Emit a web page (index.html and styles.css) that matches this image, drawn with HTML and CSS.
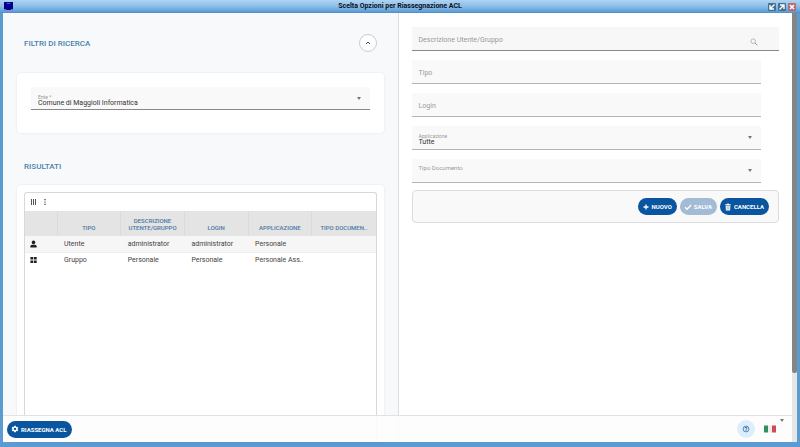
FILE: index.html
```html
<!DOCTYPE html>
<html lang="it">
<head>
    <meta charset="UTF-8">
    <meta name="viewport" content="width=device-width, initial-scale=1.0">
    <title>Scelta Opzioni per Riassegnazione ACL</title>
    <link rel="stylesheet" href="styles.css">
</head>
<body>
    <div class="window">
        <header class="titlebar">
            <svg class="app-icon" viewBox="0 0 10 10" aria-hidden="true">
                <rect width="10" height="9" fill="#00008b"/>
                <path d="M3 1.5h4" stroke="#5c6fd0"/>
                <path d="M0 8.5h2.5M7.5 8.5H10M3 9.5h4" stroke="#9a86d8"/>
            </svg>
            <h1>Scelta Opzioni per Riassegnazione ACL</h1>
            <div class="window-buttons">
                <button type="button" aria-label="Riduci">
                    <svg viewBox="0 0 8 8"><path d="M6.5 1.5L2.5 5.5M2 2v4h4" fill="none" stroke="#fff" stroke-width="1.4"/></svg>
                </button>
                <button type="button" aria-label="Ingrandisci">
                    <svg viewBox="0 0 8 8"><path d="M1.5 6.5L5.5 2.5M2 2h4v4" fill="none" stroke="#fff" stroke-width="1.4"/></svg>
                </button>
                <button type="button" class="close" aria-label="Chiudi">
                    <svg viewBox="0 0 8 8"><path d="M2 2l4 4M6 2L2 6" fill="none" stroke="#fff" stroke-width="1.6"/></svg>
                </button>
            </div>
        </header>

        <div class="content">
            <main class="panels">
                <section class="panel-left">
                    <div class="section-head">
                        <h2>FILTRI DI RICERCA</h2>
                        <button type="button" class="collapse" aria-label="Chiudi filtri">
                            <svg viewBox="0 0 6 6"><path d="M1 4l2-2 2 2" fill="none" stroke="#444" stroke-width="1"/></svg>
                        </button>
                    </div>
                    <div class="card filters">
                        <div class="field filled strong">
                            <label for="ente">Ente *</label>
                            <select id="ente">
                                <option>Comune di Maggioli Informatica</option>
                            </select>
                            <span class="arrow"></span>
                        </div>
                    </div>

                    <div class="section-head results-head">
                        <h2>RISULTATI</h2>
                    </div>
                    <div class="card results">
                        <div class="grid">
                            <div class="toolbar">
                                <button type="button" aria-label="Colonne">
                                    <svg viewBox="0 0 6 8"><path d="M.5 1v6M2.5 1v6M4.5 1v6" stroke="#555" stroke-width="1"/></svg>
                                </button>
                                <button type="button" aria-label="Altro">
                                    <svg viewBox="0 0 6 8"><path d="M2.4 1h1.2v1.2H2.4zM2.4 3.4h1.2v1.2H2.4zM2.4 5.8h1.2V7H2.4z" fill="#333"/></svg>
                                </button>
                            </div>
                            <table>
                                <thead>
                                    <tr>
                                        <th class="icon-col"></th>
                                        <th>TIPO</th>
                                        <th>DESCRIZIONE UTENTE/GRUPPO</th>
                                        <th>LOGIN</th>
                                        <th>APPLICAZIONE</th>
                                        <th>TIPO DOCUMEN..</th>
                                    </tr>
                                </thead>
                                <tbody>
                                    <tr>
                                        <td class="icon-col">
                                            <svg viewBox="0 0 7 8"><circle cx="3.5" cy="2.4" r="1.8"/><path d="M.4 7.400V6.200Q.4 4.700 2 4.700H5Q6.600 4.700 6.600 6.200V7.400Z"/></svg>
                                        </td>
                                        <td>Utente</td>
                                        <td>administrator</td>
                                        <td>administrator</td>
                                        <td>Personale</td>
                                        <td></td>
                                    </tr>
                                    <tr>
                                        <td class="icon-col">
                                            <svg viewBox="0 0 7 8"><path d="M.4 1h2.8v2.6H.4zM3.9 1h2.8v2.6H3.9zM.4 4.4h2.8V7H.4zM3.9 4.4h2.8V7H3.9z"/></svg>
                                        </td>
                                        <td>Gruppo</td>
                                        <td>Personale</td>
                                        <td>Personale</td>
                                        <td>Personale Ass..</td>
                                        <td></td>
                                    </tr>
                                </tbody>
                            </table>
                        </div>
                    </div>
                </section>

                <section class="panel-right">
                    <div class="field wide strong">
                        <label for="descrizione">Descrizione Utente/Gruppo</label>
                        <input id="descrizione" type="text">
                        <svg class="search" viewBox="0 0 8 8"><circle cx="3.2" cy="3.2" r="2.3" fill="none" stroke="#aaa" stroke-width=".8"/><path d="M5 5l2.3 2.3" stroke="#999" stroke-width="1"/></svg>
                    </div>
                    <div class="field">
                        <label for="tipo">Tipo</label>
                        <input id="tipo" type="text">
                    </div>
                    <div class="field">
                        <label for="login">Login</label>
                        <input id="login" type="text">
                    </div>
                    <div class="field filled">
                        <label for="applicazione">Applicazione</label>
                        <select id="applicazione">
                            <option>Tutte</option>
                        </select>
                        <span class="arrow"></span>
                    </div>
                    <div class="field small">
                        <label for="documento">Tipo Documento</label>
                        <select id="documento">
                            <option></option>
                        </select>
                        <span class="arrow"></span>
                    </div>
                    <div class="actions">
                        <button type="button" class="btn">
                            <svg viewBox="0 0 8 8"><path d="M4 1.5v5M1.5 4h5" stroke="#fff" stroke-width="1.3"/></svg>
                            NUOVO
                        </button>
                        <button type="button" class="btn" disabled>
                            <svg viewBox="0 0 8 8"><path d="M1 4.2l2 2L7.2 2" fill="none" stroke="#fff" stroke-width="1.4"/></svg>
                            SALVA
                        </button>
                        <button type="button" class="btn">
                            <svg viewBox="0 0 8 8"><path d="M1.200 1.200H3L3.400.6h1.200L5 1.200h1.800v.9H1.200zM1.600 2.500h4.800L6.100 7.600H1.900z" fill="#fff"/><path d="M3 3.300v3.500M4 3.300v3.500M5 3.300v3.500" stroke="#0a55a0" stroke-width=".3"/></svg>
                            CANCELLA
                        </button>
                    </div>
                </section>
            </main>
            <div class="scrollbar"><div class="thumb"></div></div>

            <footer class="footer">
                <button type="button" class="btn">
                    <svg viewBox="0 0 24 24"><path fill="#fff" d="M19.4 13a7.5 7.5 0 0 0 0-2l2.1-1.6a.5.5 0 0 0 .1-.7l-2-3.4a.5.5 0 0 0-.6-.2l-2.5 1a7.3 7.3 0 0 0-1.700-1l-.4-2.700a.5.5 0 0 0-.5-.4h-4a.5.5 0 0 0-.5.4L9 5.100a7.700 7.700 0 0 0-1.700 1l-2.500-1a.5.5 0 0 0-.6.2l-2 3.400a.5.5 0 0 0 .1.7L4.500 11a7.500 7.500 0 0 0 0 2l-2.100 1.600a.5.5 0 0 0-.1.7l2 3.400c.1.2.4.3.6.2l2.500-1a7.300 7.300 0 0 0 1.700 1l.4 2.700c0 .2.2.4.5.4h4c.3 0 .5-.2.5-.4l.4-2.700a7.700 7.700 0 0 0 1.700-1l2.500 1c.2.1.5 0 .6-.2l2-3.400a.5.5 0 0 0-.1-.7zM12 15.500a3.500 3.500 0 1 1 0-7 3.500 3.500 0 0 1 0 7z"/></svg>
                    RIASSEGNA ACL
                </button>
                <div class="footer-right">
                    <button type="button" class="help" aria-label="Aiuto">
                        <svg viewBox="0 0 8 8"><circle cx="4" cy="4" r="2.9" fill="none" stroke="#3b6ea5" stroke-width=".8"/><path d="M3 3.3q0-1 1-1t1 .9q0 .5-1 1v.5M4 5.200v.8" fill="none" stroke="#1d4d85" stroke-width=".8"/></svg>
                    </button>
                    <button type="button" class="language" aria-label="Italiano">
                        <svg class="flag" viewBox="0 0 12 8"><path d="M0 .5h4v7H0z" fill="#2f9160"/><path d="M4 .5h4v7H4z" fill="#eee"/><path d="M8 .5h4v7H8z" fill="#cf4a58"/></svg>
                        <span class="arrow"></span>
                    </button>
                </div>
            </footer>
        </div>
    </div>
</body>
</html>
```

FILE: styles.css
```css
* {
    box-sizing: border-box;
}
body {
    margin: 0;
    font-family: Roboto, 'Liberation Sans', sans-serif;
    font-size: 7px;
    color: #444;
}
h1, h2 {
    margin: 0;
}
button {
    border: none;
    padding: 0;
    background: none;
    font-family: inherit;
    cursor: pointer;
}
svg {
    display: block;
}
.window {
    display: flex;
    flex-direction: column;
    height: 100vh;
    padding: 0 3px 5px;
    background: #5b9bd2;
}
.titlebar {
    display: grid;
    grid-template-columns: 1fr auto 1fr;
    align-items: center;
    height: 13px;
    margin: 0 -3px;
    padding: 1px 4px 0;
    background: linear-gradient(#b0d3ef, #8cc0ea 50%, #5c9bd5);
    border-bottom: 1px solid #5791c4;
}
.app-icon {
    width: 9px;
    height: 9px;
}
.titlebar h1 {
    font-size: 7px;
    line-height: 11px;
    color: #0a0f1c;
}
.window-buttons {
    display: flex;
    justify-content: flex-end;
    gap: 2px;
}
.window-buttons button {
    width: 8px;
    height: 8px;
    border-radius: 1px;
    background: #456f90;
}
.window-buttons .close {
    background: #b56a70;
}
.content {
    position: relative;
    display: flex;
    flex: 1;
    min-height: 0;
    background: #fff;
}
.panels {
    display: grid;
    grid-template-columns: 1fr 1fr;
    flex: 1;
    min-width: 0;
}
.panel-left {
    display: flex;
    flex-direction: column;
    min-width: 0;
    padding: 0 14px;
    background: #f8f9fb;
}
.section-head {
    display: flex;
    align-items: center;
    justify-content: space-between;
    height: 60px;
    padding: 0 7px;
}
.results-head {
    height: 52px;
    padding-top: 14px;
}
.section-head h2 {
    font-size: 8px;
    font-weight: 500;
    color: #4a82ad;
}
.collapse {
    display: grid;
    place-items: center;
    width: 18px;
    height: 18px;
    border: 1px solid #ccc;
    border-radius: 50%;
    background: #fff;
}
.collapse svg {
    width: 6px;
    height: 6px;
}
.card {
    background: #fff;
    border-radius: 4px;
    box-shadow: 0 0 3px rgba(0, 0, 0, 0.08);
}
.filters {
    padding: 14px 14px 23px;
}

/* form fields: label and control share one grid cell */
.field {
    display: grid;
    grid-template-columns: 1fr auto;
    align-items: center;
    width: 95%;
    height: 24px;
    background: #f9f9f9;
    border-bottom: 1px solid #b4b4b4;
}
.filters .field {
    width: 100%;
    height: 23px;
}
.field.wide {
    width: 100%;
    background: #f7f7f7;
}
.field.strong {
    border-bottom-color: #888;
}
.field label {
    grid-area: 1 / 1;
    padding: 2px 0 0 7px;
    font-size: 7px;
    color: #999;
    pointer-events: none;
}
.field input,
.field select {
    grid-area: 1 / 1 / 2 / 3;
    width: 100%;
    height: 100%;
    padding: 0 7px;
    border: none;
    outline: none;
    appearance: none;
    background: none;
    font-family: inherit;
    font-size: 7px;
    color: #333;
}
.field.filled label {
    align-self: start;
    padding-top: 7px;
    font-size: 5px;
    line-height: 6px;
}
.field.filled select {
    padding-top: 9px;
}
.field.small label {
    padding-top: 0;
    margin-top: -6px;
    font-size: 6px;
}
.arrow {
    border: 2px solid transparent;
    border-top: 3px solid #777;
    border-bottom: none;
}
.field .arrow {
    grid-area: 1 / 2;
    margin-right: 9px;
    pointer-events: none;
}
.search {
    grid-area: 1 / 2;
    width: 8px;
    height: 8px;
    margin: 6px 21px 0 0;
}

/* results grid */
.results {
    display: flex;
    flex: 1;
    padding: 7px 7px 0;
    border-radius: 4px 4px 0 0;
}
.grid {
    flex: 1;
    min-width: 0;
    border: 1px solid #d8d8d8;
    border-bottom: none;
    border-radius: 3px 3px 0 0;
}
.toolbar {
    display: flex;
    align-items: center;
    gap: 5px;
    height: 18px;
    padding-left: 6px;
}
.toolbar svg {
    width: 6px;
    height: 8px;
}
table {
    width: 100%;
    table-layout: fixed;
    border-collapse: collapse;
}
th {
    height: 25px;
    padding: 0 3px 5px;
    vertical-align: bottom;
    background: #e4e4e4;
    border-left: 1px solid #dbdbdb;
    font-size: 6px;
    font-weight: 500;
    line-height: 7px;
    color: #4b77a3;
    text-align: center;
}
td {
    height: 16px;
    padding: 0 7px;
    border-bottom: 1px solid #eee;
    font-size: 7px;
    white-space: nowrap;
}
tbody tr:first-child {
    background: #f6f6f6;
}
tbody tr:last-child td {
    border-bottom: none;
}
.icon-col {
    width: 32px;
    border-left: none;
}
td.icon-col {
    padding: 0 5px;
}
td svg {
    width: 7px;
    height: 8px;
    fill: #222;
}

.panel-right {
    display: flex;
    flex-direction: column;
    gap: 9px;
    min-width: 0;
    padding: 14px 13px;
    border-left: 1px solid #dedede;
}
.actions {
    display: flex;
    align-items: center;
    justify-content: flex-end;
    gap: 3px;
    height: 33px;
    padding: 0 9px;
    margin-top: -2px;
    background: #f9f9f9;
    border: 1px solid #dcdcdc;
    border-radius: 4px;
}
.btn {
    display: flex;
    align-items: center;
    gap: 2px;
    height: 17px;
    padding: 0 5px 0 4px;
    border-radius: 9px;
    background: #0a55a0;
    font-size: 6px;
    font-weight: 700;
    color: #fff;
}
.btn:disabled {
    background: #a3bbd4;
    color: #fff;
}
.btn svg {
    width: 8px;
    height: 8px;
}

.scrollbar {
    width: 5px;
    background: #e6e6e6;
}
.thumb {
    height: 84%;
    border-radius: 0 0 2px 2px;
    background: #858585;
}

/* bar that stays over the bottom of both panels */
.footer {
    position: absolute;
    left: 0;
    right: 5px;
    bottom: 0;
    display: flex;
    align-items: center;
    justify-content: space-between;
    height: 27px;
    padding: 0 8px 0 4px;
    background: rgba(253, 253, 253, 0.9);
    border-top: 1px solid #e2e2e2;
}
.footer-right {
    display: flex;
    align-items: center;
    gap: 9px;
}
.help {
    display: grid;
    place-items: center;
    width: 18px;
    height: 18px;
    border-radius: 50%;
    background: #dceefb;
}
.help svg {
    width: 8px;
    height: 8px;
}
.language {
    display: flex;
    align-items: center;
    gap: 4px;
    height: 20px;
}
.language .arrow {
    align-self: flex-start;
}
.flag {
    width: 12px;
    height: 8px;
}
```
